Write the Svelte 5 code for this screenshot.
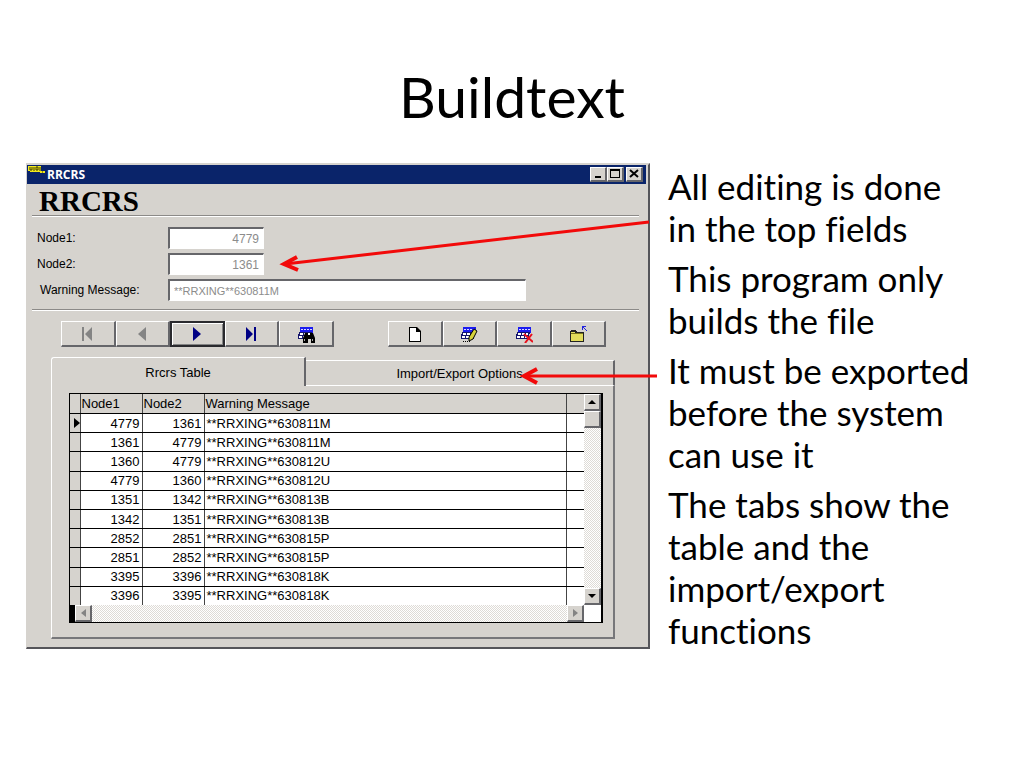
<script>
    const notes = [
        'All editing is done in the top fields',
        'This program only builds the file',
        'It must be exported before the system can use it',
        'The tabs show the table and the import/export functions'
    ];

    const rows = [
        { node1: 4779, node2: 1361, message: '**RRXING**630811M' },
        { node1: 1361, node2: 4779, message: '**RRXING**630811M' },
        { node1: 1360, node2: 4779, message: '**RRXING**630812U' },
        { node1: 4779, node2: 1360, message: '**RRXING**630812U' },
        { node1: 1351, node2: 1342, message: '**RRXING**630813B' },
        { node1: 1342, node2: 1351, message: '**RRXING**630813B' },
        { node1: 2852, node2: 2851, message: '**RRXING**630815P' },
        { node1: 2851, node2: 2852, message: '**RRXING**630815P' },
        { node1: 3395, node2: 3396, message: '**RRXING**630818K' },
        { node1: 3396, node2: 3395, message: '**RRXING**630818K' }
    ];

    let current = $state(0);
    let tab = $state('table');

    function move(to) {
        current = Math.max(0, Math.min(rows.length - 1, to));
    }
</script>

{#snippet grid()}
    <path d="M3 2h13v6H3z" fill="#1c1cf0" />
    <path d="M4 4h2v1H4zM7 4h2v1H7zM10 4h2v1h-2zM13 4h2v1h-2z" fill="#d8d8ff" />
    <path d="M2 7h13v2h-1v5H1V9h1z" fill="#15156c" />
    <path d="M3 8h3v2H3zM7 8h3v2H7zM11 8h2v2h-2zM2 11h3v2H2zM6 11h3v2H6zM10 11h3v2h-3z" fill="#fff" />
{/snippet}

<main class="slide">
    <h1>Buildtext</h1>

    <div class="content">
        <section class="window">
            <header class="titlebar">
                <svg class="appicon" width="17" height="7" viewBox="0 0 17 7">
                    <path d="M0 0h13v5h4v2H12v-1H2V5H0z" fill="#f2ea1c" />
                    <path d="M2 1v3h2V1M6 1v4M8 1v3h2V1H8M12 1v4M14 6h1" fill="none" stroke="#3a3900" />
                </svg>
                <span class="caption">RRCRS</span>
                <button class="sys" aria-label="Minimize">
                    <svg width="10" height="10" viewBox="0 0 10 10"><path d="M2 8h6" stroke="#000" stroke-width="2" /></svg>
                </button>
                <button class="sys" aria-label="Maximize">
                    <svg width="10" height="10" viewBox="0 0 10 10"><path d="M0 0h10v9H0zM1 2v6h8V2z" fill="#000" fill-rule="evenodd" /></svg>
                </button>
                <button class="sys close" aria-label="Close">
                    <svg width="10" height="10" viewBox="0 0 10 10"><path d="M1 1l8 7M9 1l-8 7" stroke="#000" stroke-width="2" /></svg>
                </button>
            </header>

            <h2>RRCRS</h2>

            <div class="fields">
                <label for="node1">Node1:</label>
                <input id="node1" class="num" value={rows[current].node1} readonly />
                <label for="node2">Node2:</label>
                <input id="node2" class="num" value={rows[current].node2} readonly />
                <label for="message" class="indent">Warning Message:</label>
                <input id="message" value={rows[current].message} readonly />
            </div>

            <!-- record navigation on the left, editing on the right -->
            <div class="toolbar">
                <button aria-label="First record" onclick={() => move(0)}>
                    <svg width="18" height="18" viewBox="0 0 18 18"><path d="M3 2h2v14H3zM13 2v14L6 9z" fill="#848484" /></svg>
                </button>
                <button aria-label="Previous record" onclick={() => move(current - 1)}>
                    <svg width="18" height="18" viewBox="0 0 18 18"><path d="M13 2v14L5 9z" fill="#848484" /></svg>
                </button>
                <button class="default" aria-label="Next record" onclick={() => move(current + 1)}>
                    <svg width="18" height="18" viewBox="0 0 18 18"><path d="M5 2v14l8-7z" fill="#000084" /></svg>
                </button>
                <button aria-label="Last record" onclick={() => move(rows.length - 1)}>
                    <svg width="18" height="18" viewBox="0 0 18 18"><path d="M4 2v14l7-7zM12 2h2v14h-2z" fill="#000084" /></svg>
                </button>
                <button aria-label="Find">
                    <svg width="18" height="18" viewBox="0 0 18 18">
                        {@render grid()}
                        <path d="M8 8h3v2h2V8h3l2 5v5h-4v-4h-3v4H6v-5z" fill="#000" />
                        <path d="M7 14h1v2H7zM15 14h1v2h-1z" fill="#aaa" />
                    </svg>
                </button>
                <span></span>
                <button aria-label="New">
                    <svg width="18" height="18" viewBox="0 0 18 18">
                        <path d="M3 2h8l4 4v11H3z" fill="#000" />
                        <path d="M4 3h6v4h4v9H4z" fill="#fff" />
                    </svg>
                </button>
                <button aria-label="Edit">
                    <svg width="18" height="18" viewBox="0 0 18 18">
                        {@render grid()}
                        <path d="M14 4l3 2-4 8-4 2v-4z" fill="#d6d23c" stroke="#000" />
                        <path d="M3 16h1v1H3zM5 16h1v1H5zM7 16h1v1H7zM9 16h1v1H9z" />
                    </svg>
                </button>
                <button aria-label="Delete">
                    <svg width="18" height="18" viewBox="0 0 18 18">
                        {@render grid()}
                        <path d="M9 9l9 8M17 9l-7 9" stroke="#e8101c" stroke-width="2" />
                    </svg>
                </button>
                <button aria-label="Close table">
                    <svg width="18" height="18" viewBox="0 0 18 18">
                        <path d="M1 6h1V5h5v1h1v1h7v10H1z" fill="#222" />
                        <path d="M2 7h4v1h8v8H2z" fill="#e2dc5c" />
                        <path d="M2 8h12v1H2z" fill="#77731c" />
                        <path d="M13 1h4v1h-2v1h1v1h1v1h1v1h-1V5h-1V4h-1V3h-1v2h-1z" fill="#2222dd" />
                    </svg>
                </button>
            </div>

            <div class="notebook">
                <div class="tabs" role="tablist">
                    <button role="tab" class:active={tab === 'table'} aria-selected={tab === 'table'} onclick={() => (tab = 'table')}>Rrcrs Table</button>
                    <button role="tab" class:active={tab === 'options'} aria-selected={tab === 'options'} onclick={() => (tab = 'options')}>Import/Export Options</button>
                </div>

                <div class="page">
                    {#if tab === 'table'}
                        <div class="browse">
                            <table>
                                <colgroup>
                                    <col class="mark" />
                                    <col class="node" />
                                    <col class="node" />
                                    <col />
                                    <col class="rest" />
                                </colgroup>
                                <thead>
                                    <tr><th></th><th>Node1</th><th>Node2</th><th>Warning Message</th><th></th></tr>
                                </thead>
                                <tbody>
                                    {#each rows as row, i}
                                        <tr>
                                            <td class="marker">
                                                {#if i === current}
                                                    <svg width="6" height="10" viewBox="0 0 6 10"><path d="M0 0l6 5-6 5z" /></svg>
                                                {/if}
                                            </td>
                                            <td class="num">{row.node1}</td>
                                            <td class="num">{row.node2}</td>
                                            <td>{row.message}</td>
                                            <td></td>
                                        </tr>
                                    {/each}
                                </tbody>
                            </table>
                            <div class="vscroll">
                                <button aria-label="Scroll up"><svg width="8" height="4" viewBox="0 0 8 4"><path d="M0 4l4-4 4 4z" /></svg></button>
                                <div class="thumb"></div>
                                <button class="end" aria-label="Scroll down"><svg width="8" height="4" viewBox="0 0 8 4"><path d="M0 0h8l-4 4z" /></svg></button>
                            </div>
                            <div class="hscroll">
                                <button aria-label="Scroll left" disabled><svg width="5" height="8" viewBox="0 0 5 8"><path d="M5 0v8l-5-4z" fill="#848484" /></svg></button>
                                <button class="end" aria-label="Scroll right" disabled><svg width="5" height="8" viewBox="0 0 5 8"><path d="M0 0v8l5-4z" fill="#848484" /></svg></button>
                            </div>
                        </div>
                    {/if}
                </div>
            </div>

            <!-- callout arrows laid over the window -->
            <svg class="arrows" viewBox="0 0 624 486" fill="none" stroke="#f20a0a" stroke-width="3">
                <path d="M623 59L259 101M631 213H499" />
                <path d="M271 94l-13 7 14 6M511 206l-13 7 13 7" stroke-width="4" />
            </svg>
        </section>

        <div class="notes">
            {#each notes as note}
                <p>{note}</p>
            {/each}
        </div>
    </div>
</main>

<style>
    :global(body) {
        background: #fff;
    }
    .slide {
        padding: 60px 50px 40px 26px;
        color: #000;
        font-family: Lato, sans-serif;
        font-variant-ligatures: none;
    }
    h1 {
        margin: 0 0 31px 24px;
        font-size: 57px;
        line-height: 72px;
        font-weight: 400;
        text-align: center;
    }
    .content {
        display: grid;
        grid-template-columns: minmax(0, 624fr) minmax(0, 306fr);
        gap: 18px;
        align-items: start;
    }
    .notes {
        padding-top: 2px;
        font-size: 35px;
        line-height: 42px;
    }
    .notes p {
        margin: 0 0 8px;
    }

    /* window */
    .window {
        position: relative;
        box-sizing: border-box;
        padding: 0 2px 8px 0;
        border: solid;
        border-width: 2px 2px 2px 1px;
        border-color: #d6d3ce #55555a #55555a #d6d3ce;
        background: #d6d3ce;
        font-family: "Liberation Sans", Arial, sans-serif;
        font-size: 12px;
    }
    .titlebar {
        display: flex;
        align-items: center;
        height: 19px;
        padding-right: 3px;
        background: #0a246a;
        color: #fff;
    }
    .appicon {
        align-self: flex-start;
        margin: 1px 2px 0 1px;
    }
    .caption {
        flex: 1;
        font: bold 12px "Open Sans", sans-serif;
    }
    button {
        display: flex;
        align-items: center;
        justify-content: center;
        padding: 0;
        border: solid;
        border-width: 1px 2px 2px 1px;
        border-color: #fff #66666a #66666a #fff;
        background: #d6d3ce;
        color: #000;
        font: inherit;
    }
    .sys {
        width: 17px;
        height: 15px;
    }
    .close {
        margin-left: 2px;
    }
    h2 {
        margin: 0 7px 0 5px;
        padding: 4px 0 0 7px;
        border-bottom: 1px solid #8c8a88;
        box-shadow: 0 1px #fff;
        font: bold 29px/27px "Liberation Serif", "Times New Roman", serif;
    }
    .fields {
        display: grid;
        grid-template-columns: 131px 1fr;
        gap: 4px 0;
        align-items: center;
        margin: 0 7px 0 5px;
        padding: 11px 0 8px 5px;
        border-bottom: 1px solid #8c8a88;
        box-shadow: 0 1px #fff;
    }
    .indent {
        padding-left: 3px;
    }
    input {
        box-sizing: border-box;
        width: 358px;
        height: 22px;
        padding: 0 4px;
        border: solid;
        border-width: 2px 1px 1px 2px;
        border-color: #66666a #fff #fff #66666a;
        background: #fff;
        color: #8c8c8c;
        font: 11px "Liberation Sans", Arial, sans-serif;
    }
    input.num {
        width: 96px;
        font-size: 12px;
    }
    .num {
        text-align: right;
    }
    .toolbar {
        display: grid;
        grid-template-columns: repeat(10, 1fr);
        margin: 11px 40px 10px 34px;
    }
    .toolbar button {
        height: 26px;
    }
    .toolbar .default {
        border: 2px solid #2a2a2e;
        box-shadow: inset 1px 1px #fff, inset -1px -1px #848484;
    }

    /* notebook */
    .notebook {
        margin: 0 31px 0 24px;
        font-size: 13px;
    }
    .tabs {
        display: flex;
        align-items: flex-end;
    }
    .tabs button {
        flex: 309;
        height: 26px;
        border-width: 1px 2px 1px 0;
        border-bottom-color: #fff;
    }
    .tabs button.active {
        flex: 254;
        height: 29px;
        border-width: 1px 2px 0 1px;
        border-radius: 3px 0 0;
    }
    .page {
        padding: 7px 10px 14px 17px;
        border: solid;
        border-width: 0 2px 2px 1px;
        border-color: #fff #77777a #77777a #fff;
    }
    .browse {
        display: grid;
        grid-template-columns: 1fr 17px;
        border: 1px solid #000;
        border-right-width: 2px;
        background: #fff;
    }
    table {
        width: 100%;
        height: 211px;
        border-collapse: collapse;
        table-layout: fixed;
    }
    .mark {
        width: 10px;
    }
    .node {
        width: 62px;
    }
    .rest {
        width: 18px;
    }
    th, td {
        padding: 0 2px;
        border-right: 1px solid #444;
        border-bottom: 1px solid #000;
        line-height: 17px;
        text-align: left;
        white-space: nowrap;
    }
    th {
        height: 19px;
        padding: 0 1px;
        background: #d6d3ce;
        font-weight: 400;
    }
    td.num {
        text-align: right;
    }
    th:last-child, td:last-child {
        border-right: 0;
    }
    tbody tr:last-child td {
        border-bottom: 0;
    }
    .marker {
        padding: 0 0 0 4px;
        background: #d6d3ce;
    }
    .marker svg {
        display: block;
    }
    .vscroll, .hscroll {
        display: flex;
        background: repeating-conic-gradient(#fff 0 25%, #dedbd6 0 50%) 0 0 / 2px 2px;
    }
    .vscroll {
        flex-direction: column;
    }
    .hscroll {
        border-left: 5px solid #000;
    }
    .vscroll button, .hscroll button, .thumb {
        box-sizing: border-box;
        width: 17px;
        height: 17px;
    }
    .thumb {
        border: solid;
        border-width: 1px 2px 2px 1px;
        border-color: #fff #66666a #66666a #fff;
        background: #d6d3ce;
    }
    .vscroll .end {
        margin-top: auto;
    }
    .hscroll .end {
        margin-left: auto;
    }
    .arrows {
        position: absolute;
        top: -2px;
        left: -1px;
        width: calc(100% + 3px);
        overflow: visible;
        pointer-events: none;
    }
</style>
